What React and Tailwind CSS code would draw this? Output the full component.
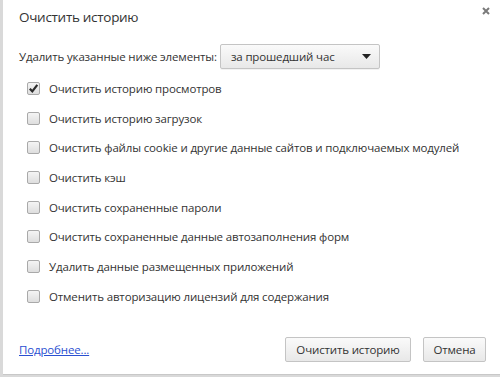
import React, { useState } from 'react';

const items = [
	{ label: 'Очистить историю просмотров', checked: true },
	{ label: 'Очистить историю загрузок', checked: false },
	{ label: 'Очистить файлы cookie и другие данные сайтов и подключаемых модулей', checked: false },
	{ label: 'Очистить кэш', checked: false },
	{ label: 'Очистить сохраненные пароли', checked: false },
	{ label: 'Очистить сохраненные данные автозаполнения форм', checked: false },
	{ label: 'Удалить данные размещенных приложений', checked: false },
	{ label: 'Отменить авторизацию лицензий для содержания', checked: false },
];

function Checkbox({ checked, onClick }) {
	return (
		<button
			onClick={onClick}
			className="w-[13px] h-[13px] rounded-[2px] border border-[#a9a9a9] bg-gradient-to-b from-[#f4f4f4] to-[#dedede] flex items-center justify-center shrink-0"
		>
			{checked && (
				<svg width="11" height="11" viewBox="0 0 11 11">
					<path d="M1.8 5.8 L4.3 8.3 L9.3 1.8" fill="none" stroke="#2b2b2b" strokeWidth="2.2" />
				</svg>
			)}
		</button>
	);
}

export default function App() {
	const [state, setState] = useState(items.map(i => i.checked));

	const toggle = (idx) => {
		setState(prev => prev.map((v, i) => (i === idx ? !v : v)));
	};

	return (
		<div className="w-[500px] h-[377px] bg-[#d9d9d9] pl-[3px] pb-[1px] overflow-hidden" style={{ fontFamily: '"Open Sans", "Noto Sans", sans-serif' }}>
			<div className="h-[375px] bg-white border-b border-[#c8c8c8] flex flex-col text-[#333333]">
				{/* Header */}
				<div className="flex items-start justify-between pl-[16px] pr-[10px] pt-[6px]">
					<h1 className="text-[13.5px] tracking-[-0.3px] leading-[22px] text-[#333]">Очистить историю</h1>
					<button className="mt-0 w-[9px] h-[9px] flex items-center justify-center">
						<svg width="8" height="8" viewBox="0 0 8 8">
							<path d="M1 1 L7 7 M7 1 L1 7" stroke="#7a7a7a" strokeWidth="2" />
						</svg>
					</button>
				</div>

				{/* Period */}
				<div className="flex items-center pl-[16px] mt-[16px] text-[11.5px] tracking-[-0.15px]">
					<span>Удалить указанные ниже элементы:</span>
					<div className="ml-[3px] w-[160px] h-[25px] border border-[#c4c4c4] rounded-[2px] bg-gradient-to-b from-[#fafafa] to-[#e8e8e8] flex items-center justify-between pl-[10px] pr-[8px] shadow-[0_1px_0_rgba(0,0,0,0.05)]">
						<span>за прошедший час</span>
						<svg width="9" height="6" viewBox="0 0 9 6">
							<path d="M0 0 H9 L4.5 5 Z" fill="#222" />
						</svg>
					</div>
				</div>

				{/* Checkboxes */}
				<div className="flex flex-col pl-[24px] mt-[11px] gap-[12.7px] text-[11.5px] tracking-[-0.15px]">
					{items.map((item, idx) => (
						<label key={idx} className="flex items-center gap-[9px] h-[17px] cursor-default">
							<Checkbox checked={state[idx]} onClick={() => toggle(idx)} />
							<span className="whitespace-nowrap">{item.label}</span>
						</label>
					))}
				</div>

				{/* Footer */}
				<div className="mt-auto flex items-center justify-between pl-[16px] pr-[14px] pb-[12px] text-[11.5px] tracking-[-0.15px]">
					<a href="#" className="text-[#2a50d1] underline">Подробнее...</a>
					<div className="flex gap-[12px]">
						<button className="h-[25px] w-[126px] whitespace-nowrap border border-[#c4c4c4] rounded-[2px] bg-gradient-to-b from-[#fafafa] to-[#e8e8e8]">Очистить историю</button>
						<button className="h-[25px] w-[63px] whitespace-nowrap border border-[#c4c4c4] rounded-[2px] bg-gradient-to-b from-[#fafafa] to-[#e8e8e8]">Отмена</button>
					</div>
				</div>
			</div>
		</div>
	);
}
